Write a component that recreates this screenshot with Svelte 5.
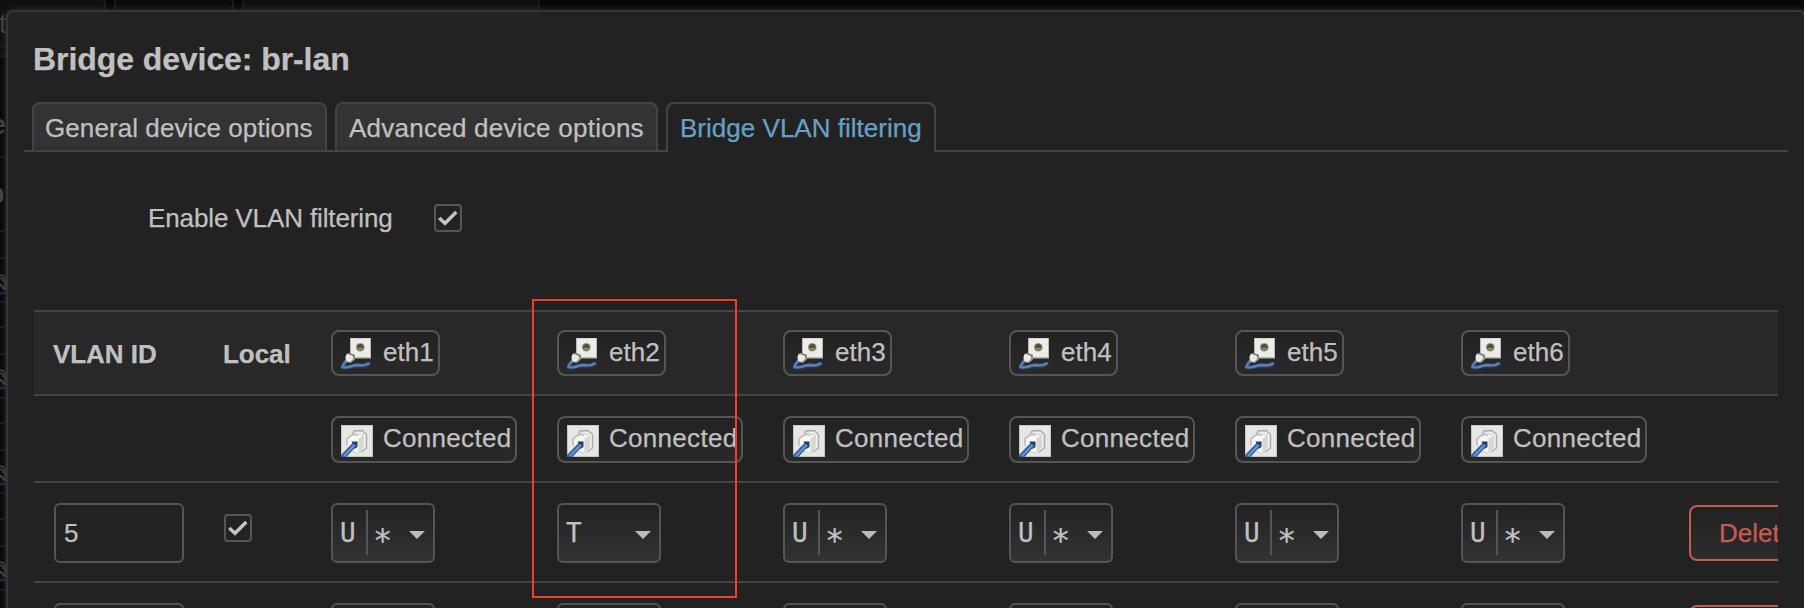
<script>
  const ports = ['eth1', 'eth2', 'eth3', 'eth4', 'eth5', 'eth6'];
  const rows = [
    { id: '5', tagged: 1 },
    { id: '', tagged: 1 }
  ];
  const rules = [47, 157, 231, 258, 302, 327, 354, 398, 423, 450, 493, 519, 546, 590];
  const pageIcons = [270, 365, 461, 557];
</script>

{#snippet portIcon()}
  <svg class="icon" viewBox="0 0 32 32">
    <path d="M6 23C3.500 25.500 1.500 27 2 29.500C6 31 11 28 17 27.800Q24 29.500 28 26" fill="none" stroke="#26384f" stroke-width="4.600" stroke-linecap="round" opacity=".8" />
    <path d="M5.500 22.500C4 25 1.500 26.500 1.500 29C6 30.800 11 27 17 27Q24 28 27.500 25.500" fill="none" stroke="#587db8" stroke-width="2.800" stroke-linecap="round" />
    <rect x="9" y="0" width="21" height="20.500" fill="#b9b9b5" />
    <rect x="10" y=".5" width="19" height="18.500" fill="#ecece8" />
    <circle cx="19.300" cy="9.300" r="4.300" fill="#91918c" />
    <circle cx="19.300" cy="9.300" r="3.300" fill="#4a4d55" />
    <path d="M16.200 9.800h6.300q-.5 3-3.100 3t-3.200-3z" fill="#988434" />
    <path d="M7 14.800l6.800 1.700.2 5-4 3.500-5-1-.5-5z" fill="#8f8f8b" />
    <path d="M5.500 16l6.500 1.500v3.500l-3 3-3.700-1-.8-4z" fill="#e8e8e4" />
    <path d="M9 15.500l4.500 3" stroke="#73736f" stroke-width="1.200" />
  </svg>
{/snippet}

{#snippet linkIcon()}
  <svg class="icon" viewBox="0 0 32 32">
    <rect width="32" height="32" fill="#c4c6c3" />
    <rect x="1" y="1" width="30" height="30" fill="#e5e7e4" />
    <path d="M11 10l2-4 8-.5 4.500 4v13.500L20 27" fill="#eeeeec" stroke="#aaaba7" stroke-width="1.400" />
    <path d="M6 13l7-5 9 2v12l-5 6-8-2-3-7z" fill="#f7f7f5" stroke="#d0d1cd" />
    <path d="M17.500 13.500l5-3v12l-5 5z" fill="#d6d7d3" />
    <path d="M6 20v-6l3-2.500 4-2 4 1" fill="none" stroke="#b4b5b1" stroke-width="1.200" />
    <path d="M10.500 16.500h6v5.500l-3 2z" fill="#293b56" />
    <path d="M0 32v-2L11.500 18l4.500 2.500L5.500 32z" fill="#3765a5" />
    <path d="M3 31L13.500 20" stroke="#7b9bcb" stroke-width="1.800" />
  </svg>
{/snippet}

{#snippet check()}
  <span class="check">
    <svg viewBox="0 0 28 28"><path d="M5.200 14l5.800 5.300L22.300 8" fill="none" stroke="#c4c4c4" stroke-width="3.400" /></svg>
  </span>
{/snippet}

<div class="screen">
  <svg class="page" width="1804" height="608">
    <g fill="#101010" stroke="#1c1c1c" stroke-width="2">
      <rect x="-20" y="-4" width="125" height="60" rx="8" />
      <rect x="115" y="-4" width="118" height="60" rx="8" fill="#0b0b0b" />
      <rect x="243" y="-4" width="296" height="60" rx="8" />
    </g>
    {#each rules as y}
      <path d="M0 {y}h8" stroke="#191919" stroke-width="2" />
    {/each}
    <g fill="#444" font-family="Liberation Sans, sans-serif" font-size="27">
      <text x="-1" y="33">t</text>
      <text x="-9" y="134" font-weight="700">e</text>
      <text x="-12" y="203" font-weight="700">p</text>
    </g>
    {#each pageIcons as y}
      <g transform="translate(0 {y})" fill="none">
        <path d="M0 5q5 0 5 5v10" stroke="#3c3c3a" stroke-width="2" />
        <path d="M0 8q3 0 3 4" stroke="#40391b" stroke-width="2" />
        <path d="M0 14l5 6" stroke="#444" stroke-width="2" />
        <path d="M0 23h6" stroke="#1a263a" stroke-width="3" />
      </g>
    {/each}
  </svg>

  <main class="modal">
    <h4>Bridge device: br-lan</h4>
    <nav>
      <span class="tab general">General device options</span>
      <span class="tab advanced">Advanced device options</span>
      <span class="tab active">Bridge VLAN filtering</span>
    </nav>
    <div class="field">
      <span class="label">Enable VLAN filtering</span>
      {@render check()}
    </div>

    <section class="table">
      <div class="tr head">
        <b class="vid">VLAN ID</b>
        <b class="local">Local</b>
        {#each ports as port}
          <div><span class="badge">{@render portIcon()}<span>{port}</span></span></div>
        {/each}
      </div>
      <div class="tr status">
        <i></i><i></i>
        {#each ports as port}
          <div><span class="badge link">{@render linkIcon()}<span>Connected</span></span></div>
        {/each}
      </div>
      {#each rows as row}
        <div class="tr entry">
          <div class="input">{row.id}</div>
          <div class="local-check">{@render check()}</div>
          {#each ports as port, i}
            <div class="select">
              {#if i === row.tagged}
                <span class="mode plain">T</span>
              {:else}
                <span class="mode">U</span><span class="star">*</span>
              {/if}
              <svg class="arrow" viewBox="0 0 16 8"><path d="M0 0h16L8 8z" fill="#bbb" /></svg>
            </div>
          {/each}
          <div class="delete">Delete</div>
        </div>
      {/each}
    </section>
  </main>
  <div class="highlight"></div>
</div>

<style>
  :global(body) { background: #080808; }
  .screen {
    position: relative;
    box-sizing: border-box;
    width: 1804px;
    height: 608px;
    padding: 10px 0 0 6px;
    overflow: hidden;
    background: #080808;
    color: #c0c0c0;
    font: 26px/36px "Liberation Sans", Arial, sans-serif;
    -webkit-text-stroke: .25px currentColor;
  }
  .screen * { box-sizing: border-box; }
  .page { position: absolute; left: 0; top: 0; }
  .modal {
    position: relative;
    width: 1800px;
    height: 640px;
    border: 2px solid #363636;
    border-radius: 7px;
    padding: 0 16px;
    background: #222;
    box-shadow: 0 0 6px #333;
  }
  h4 {
    height: 90px;
    margin: 0;
    padding: 29px 0 0 9px;
    font-size: 32px;
    line-height: 36px;
    letter-spacing: -0.08px;
  }
  nav {
    display: flex;
    gap: 8px;
    width: 1764px;
    height: 50px;
    padding-left: 8px;
    background: linear-gradient(#444, #444) 0 100% / 100% 2px no-repeat;
  }
  .tab {
    height: 50px;
    padding: 6px 0 0 12px;
    border: 2px solid #444;
    border-radius: 8px 8px 0 0;
    background: linear-gradient(#333 90%, #2d2d2d);
    white-space: nowrap;
  }
  .general { width: 295px; padding-left: 11px; letter-spacing: .08px; }
  .advanced { width: 323px; letter-spacing: .25px; }
  .active {
    width: 270px;
    border-bottom: 0;
    background: #222;
    color: #65a1c2;
    letter-spacing: .02px;
  }
  .field { display: flex; height: 158px; padding: 52px 0 0 124px; }
  .label { width: 286px; margin-top: -4px; letter-spacing: -.12px; }
  .check {
    display: block;
    width: 28px;
    height: 28px;
    border: 2px solid #555;
    border-radius: 4px;
  }
  .check svg { display: block; width: 28px; height: 28px; margin: -2px; }
  .table { width: 1744px; margin-left: 10px; overflow: hidden; }
  .tr {
    display: grid;
    grid-template-columns: 170px 107px repeat(6, 226px) 140px;
    align-items: start;
    padding-left: 20px;
    border-top: 2px solid #444;
  }
  .head { height: 84px; padding-top: 18px; background: #282828; }
  .status { height: 87px; padding-top: 20px; }
  .entry { height: 100px; padding-top: 20px; }
  b { padding-top: 6px; margin-left: -1px; letter-spacing: -.05px; }
  .badge {
    display: flex;
    width: 109px;
    height: 46px;
    padding: 6px 0 0 8px;
    border: 2px solid #555;
    border-radius: 8px;
    background: linear-gradient(#222, #292929);
    white-space: nowrap;
  }
  .badge span { margin: -4px 0 0 10px; }
  .icon { display: block; width: 32px; height: 32px; flex: none; }
  .link { width: 186px; height: 47px; padding-top: 7px; }
  .link span { margin-top: -5px; letter-spacing: .3px; }
  .input {
    width: 130px;
    height: 60px;
    padding: 10px 8px;
    border: 2px solid #555;
    border-radius: 6px;
  }
  .local-check { padding-top: 11px; }
  .select {
    display: flex;
    width: 104px;
    height: 60px;
    padding: 5px 8px 0 7px;
    border: 2px solid #555;
    border-radius: 6px;
    background: linear-gradient(#222, #333);
    font: 26px/50px "DejaVu Sans Mono", monospace;
  }
  .mode { width: 28px; height: 45px; border-right: 2px solid #555; line-height: 46px; }
  .plain { border: 0; }
  .star { margin: 5px 0 0 5px; font-size: 32px; }
  .arrow { width: 16px; height: 8px; margin: 21px 0 0 auto; }
  .delete {
    width: 134px;
    height: 56px;
    margin: 2px 0 0 2px;
    padding: 8px 0 0 28px;
    border: 2px solid #c95a52;
    border-radius: 8px;
    background: linear-gradient(#222, #2c2c2c);
    color: #c95a52;
  }
  .highlight {
    position: absolute;
    left: 532px;
    top: 299px;
    width: 205px;
    height: 299px;
    border: 2px solid #eb4128;
  }
</style>
